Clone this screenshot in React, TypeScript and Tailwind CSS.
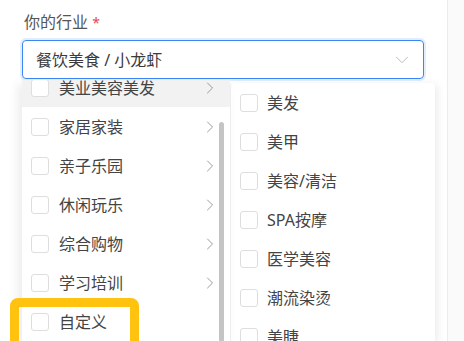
import React from "react";
import { ChevronDown, ChevronRight } from "lucide-react";

const font = { fontFamily: '"Noto Sans", "Noto Sans CJK SC", sans-serif' };

const leftItems = ["美业美容美发", "家居家装", "亲子乐园", "休闲玩乐", "综合购物", "学习培训", "自定义"];
const rightItems = ["美发", "美甲", "美容/清洁", "SPA按摩", "医学美容", "潮流染烫", "美睫"];

function Box() {
  return <span className="w-[18px] h-[18px] shrink-0 rounded-[3px] border border-[#dedede] bg-white" />;
}

export default function App() {
  return (
    <div className="relative w-[464px] h-[341px] overflow-hidden bg-white flex text-[16px]" style={font}>
      <div className="w-[448px] h-full border-r border-[#ececec] flex flex-col pl-[22px]">
        <div className="mt-[10px] h-[24px] leading-[24px] pl-[2px] text-[#555]">
          你的行业 <span className="text-[#e5484d] text-[14px]">*</span>
        </div>
        <div className="mt-[6px] w-[402px] h-[39px] rounded-[4px] border border-[#3b86f5] shadow-[0_0_0_2px_rgba(59,134,245,0.15)] flex items-center pl-[13px] pr-[10px] text-[#3a3a3a]">
          <span className="flex-1">餐饮美食 / 小龙虾</span>
          <ChevronDown size={22} strokeWidth={1} className="text-[#b5b5b5]" />
        </div>
        <div className="mt-[1px] flex flex-1 min-h-0">
          <div className="relative w-[208px] bg-white overflow-hidden shadow-[-4px_4px_10px_rgba(0,0,0,0.08)]">
            <div className="-mt-[12px] flex flex-col">
              {leftItems.map((t, i) => (
                <div key={t} className={"h-[39px] flex items-center pl-[9px] pr-[10px] gap-[10px] text-[#444] " + (i === 0 ? "bg-[#f2f2f2]" : "")}>
                  <Box />
                  <span className="flex-1">{t}</span>
                  {i < 6 && <ChevronRight size={20} strokeWidth={1} className="text-[#888]" />}
                </div>
              ))}
            </div>
            <div className="absolute left-[197px] top-[42px] w-[5px] h-[220px] rounded-full bg-[#c4c4c4]" />
          </div>
          <div className="w-[205px] mt-[3px] rounded-t-[4px] bg-white shadow-[2px_2px_10px_rgba(0,0,0,0.09)] border-l border-[#f0f0f0] flex flex-col">
            {rightItems.map((t) => (
              <div key={t} className="h-[39px] shrink-0 flex items-center pl-[9px] gap-[9px] text-[#444]">
                <Box />
                <span>{t}</span>
              </div>
            ))}
          </div>
        </div>
      </div>
      <div className="flex-1 bg-[#fafafa]" />
      <div className="absolute left-[10px] top-[298px] w-[129px] h-[52px] rounded-[8px] border-[9px] border-[#ffc20e]" />
    </div>
  );
}
